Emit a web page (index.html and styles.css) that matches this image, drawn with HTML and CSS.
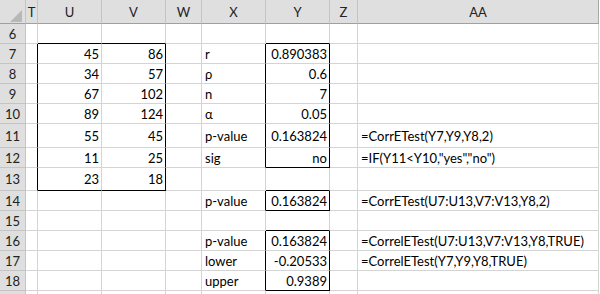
FILE: index.html
```html
<!DOCTYPE html>
<html>
<head>
<meta charset="utf-8">
<link rel="stylesheet" href="styles.css">
</head>
<body>
<div class="sheet">
  <div class="ch corner"><svg class="tri" width="14" height="14" viewBox="0 0 14 14"><polygon points="13,1 13,13 1,13" fill="#b8b8b8"/></svg></div>
  <div class="ch">T</div>
  <div class="ch">U</div>
  <div class="ch">V</div>
  <div class="ch">W</div>
  <div class="ch">X</div>
  <div class="ch">Y</div>
  <div class="ch">Z</div>
  <div class="ch last">AA</div>

  <div class="rh">6</div><div class="c"></div><div class="c bb"></div><div class="c bb"></div><div class="c"></div><div class="c"></div><div class="c bb"></div><div class="c"></div><div class="c"></div>

  <div class="rh">7</div><div class="c rb"></div><div class="c n">45</div><div class="c n rb">86</div><div class="c"></div><div class="c t rb">r</div><div class="c n rb">0.890383</div><div class="c"></div><div class="c"></div>

  <div class="rh">8</div><div class="c rb"></div><div class="c n">34</div><div class="c n rb">57</div><div class="c"></div><div class="c t rb">ρ</div><div class="c n rb">0.6</div><div class="c"></div><div class="c"></div>

  <div class="rh">9</div><div class="c rb"></div><div class="c n">67</div><div class="c n rb">102</div><div class="c"></div><div class="c t rb">n</div><div class="c n rb">7</div><div class="c"></div><div class="c"></div>

  <div class="rh">10</div><div class="c rb"></div><div class="c n">89</div><div class="c n rb">124</div><div class="c"></div><div class="c t rb">α</div><div class="c n rb">0.05</div><div class="c"></div><div class="c"></div>

  <div class="rh">11</div><div class="c rb"></div><div class="c n">55</div><div class="c n rb">45</div><div class="c"></div><div class="c t rb">p-value</div><div class="c n rb">0.163824</div><div class="c"></div><div class="c t">=CorrETest(Y7,Y9,Y8,2)</div>

  <div class="rh">12</div><div class="c rb"></div><div class="c n">11</div><div class="c n rb">25</div><div class="c"></div><div class="c t rb">sig</div><div class="c n rb bb">no</div><div class="c"></div><div class="c t">=IF(Y11&lt;Y10,"yes","no")</div>

  <div class="rh">13</div><div class="c rb"></div><div class="c n bb">23</div><div class="c n rb bb">18</div><div class="c"></div><div class="c"></div><div class="c bb"></div><div class="c"></div><div class="c"></div>

  <div class="rh">14</div><div class="c"></div><div class="c"></div><div class="c"></div><div class="c"></div><div class="c t rb">p-value</div><div class="c n rb bb">0.163824</div><div class="c"></div><div class="c t">=CorrETest(U7:U13,V7:V13,Y8,2)</div>

  <div class="rh">15</div><div class="c"></div><div class="c"></div><div class="c"></div><div class="c"></div><div class="c"></div><div class="c bb"></div><div class="c"></div><div class="c"></div>

  <div class="rh">16</div><div class="c"></div><div class="c"></div><div class="c"></div><div class="c"></div><div class="c t rb">p-value</div><div class="c n rb">0.163824</div><div class="c"></div><div class="c t">=CorrelETest(U7:U13,V7:V13,Y8,TRUE)</div>

  <div class="rh">17</div><div class="c"></div><div class="c"></div><div class="c"></div><div class="c"></div><div class="c t rb">lower</div><div class="c n rb">-0.20533</div><div class="c"></div><div class="c t">=CorrelETest(Y7,Y9,Y8,TRUE)</div>

  <div class="rh">18</div><div class="c"></div><div class="c"></div><div class="c"></div><div class="c"></div><div class="c t rb">upper</div><div class="c n rb bb">0.9389</div><div class="c"></div><div class="c"></div>

  <div class="rh"></div><div class="c"></div><div class="c"></div><div class="c"></div><div class="c"></div><div class="c"></div><div class="c"></div><div class="c"></div><div class="c"></div>
</div>
</body>
</html>
```

FILE: styles.css
```css
html, body {
  margin: 0;
  padding: 0;
  background: #ffffff;
  overflow: hidden;
}
body {
  width: 600px;
  height: 294px;
}
.sheet {
  display: grid;
  grid-template-columns: 26px 12px 64px 64px 36px 64px 64px 28px 241px;
  grid-template-rows: 24px 20px 20px 20px 20px 20px 24px 20px 23px 20px 20px 20px 20px 20px 20px;
  font-family: Lato, "Open Sans", sans-serif;
  font-size: 13px;
  color: #000;
  background: #fff;
}
.ch {
  background: #dfdfdf;
  border-right: 1px solid #c4c4c4;
  border-bottom: 1px solid #a0a0a0;
  display: flex;
  align-items: center;
  justify-content: center;
  color: #222;
  padding-top: 1px;
  box-sizing: border-box;
}
.ch.last {
  border-right-color: #a8a8a8;
}
.corner {
  position: relative;
  padding: 0;
}
.tri {
  position: absolute;
  left: 9px;
  top: 9px;
}
.rh {
  background: #dfdfdf;
  border-right: 1px solid #c4c4c4;
  border-bottom: 1px solid #c4c4c4;
  display: flex;
  align-items: center;
  justify-content: center;
  color: #222;
  box-sizing: border-box;
}
.c {
  border-right: 1px solid #d4d4d4;
  border-bottom: 1px solid #d4d4d4;
  display: flex;
  align-items: center;
  padding: 0 2px 0 3px;
  box-sizing: border-box;
  white-space: nowrap;
  overflow: visible;
  min-width: 0;
}
.n {
  justify-content: flex-end;
}
.t {
  justify-content: flex-start;
}
.rb {
  border-right-color: #000;
}
.bb {
  border-bottom-color: #000;
}
```
